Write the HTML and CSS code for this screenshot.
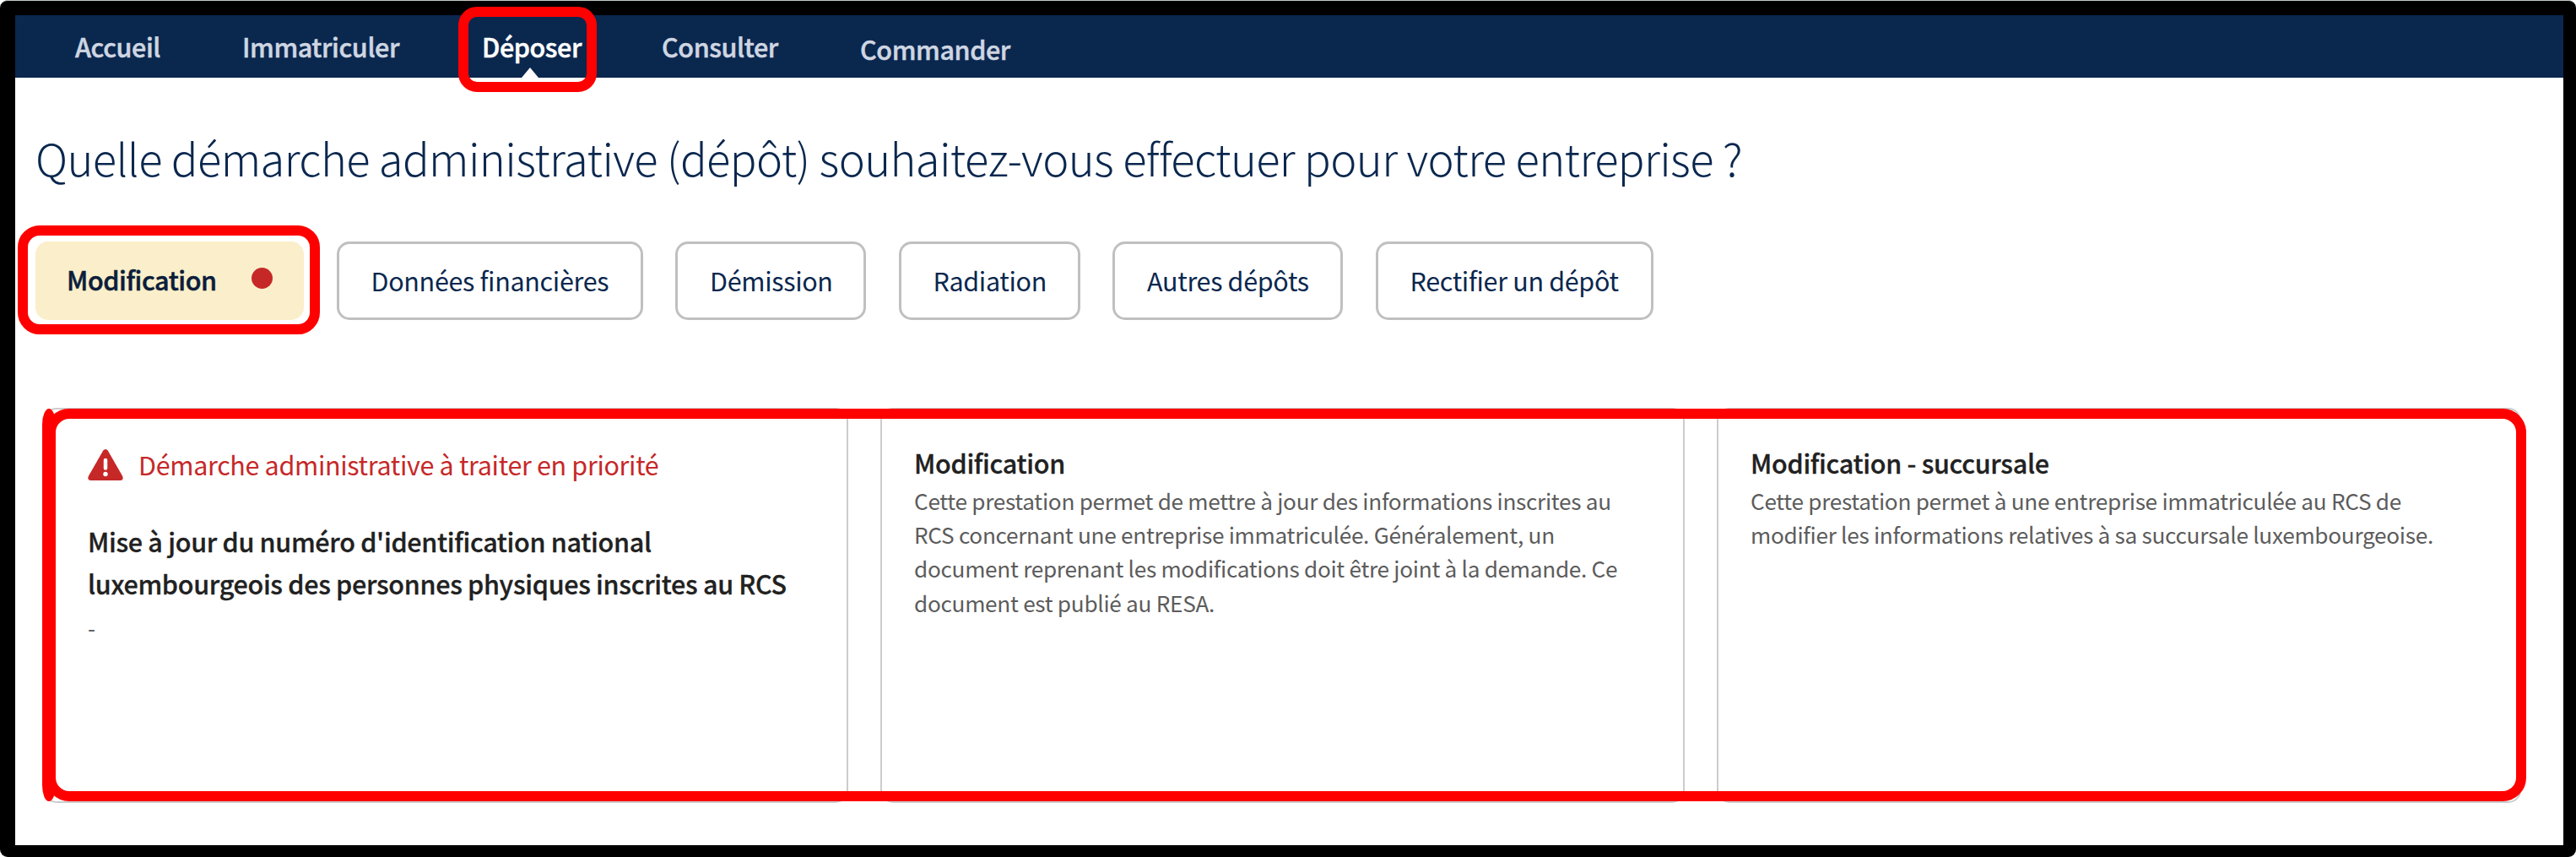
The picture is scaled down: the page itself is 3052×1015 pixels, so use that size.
FILE: index.html
```
<!DOCTYPE html>
<html lang="fr">
<head>
    <meta charset="UTF-8">
    <meta name="viewport" content="width=device-width, initial-scale=1.0">
    <title>Déposer</title>
    <link rel="stylesheet" href="styles.css">
</head>
<body>
    <div class="page">

        <!-- Menu principal -->
        <nav class="menu">
            <a class="menu-item accueil">Accueil</a>
            <a class="menu-item immatriculer">Immatriculer</a>
            <a class="menu-item active">Déposer<span class="highlight highlight-menu"></span></a>
            <a class="menu-item consulter">Consulter</a>
            <a class="menu-item commander">Commander</a>
        </nav>

        <main class="content">
            <h1>Quelle démarche administrative (dépôt) souhaitez-vous effectuer pour votre entreprise ?</h1>

            <!-- Choix de la démarche -->
            <div class="tabs">
                <button class="tab selected">Modification<span class="dot"></span><span class="highlight highlight-tab"></span></button>
                <button class="tab donnees">Données financières</button>
                <button class="tab demission">Démission</button>
                <button class="tab radiation">Radiation</button>
                <button class="tab autres">Autres dépôts</button>
                <button class="tab rectifier">Rectifier un dépôt</button>
            </div>

            <div class="cards">
                <div class="card">
                    <div class="alert">
                        <svg class="alert-icon" viewBox="0 0 42 37">
                            <path fill="#c62828" d="M18.300 1.600Q21-1.600 23.700 1.600L41.200 32Q42.800 36.500 38.500 37H3.500Q-.8 36.500.8 32Z"/>
                            <path stroke="#fff" stroke-width="4.500" stroke-linecap="round" d="M21 13v9.500"/>
                            <circle cx="21" cy="29.500" r="2.700" fill="#fff"/>
                        </svg>
                        <span>Démarche administrative à traiter en priorité</span>
                    </div>
                    <h2 class="priority">Mise à jour du numéro d'identification national<br>luxembourgeois des personnes physiques inscrites au RCS</h2>
                    <p>-</p>
                </div>
                <div class="card">
                    <h2>Modification</h2>
                    <p>Cette prestation permet de mettre à jour des informations inscrites au<br>RCS concernant une entreprise immatriculée. Généralement, un<br>document reprenant les modifications doit être joint à la demande. Ce<br>document est publié au RESA.</p>
                </div>
                <div class="card">
                    <h2>Modification - succursale</h2>
                    <p>Cette prestation permet à une entreprise immatriculée au RCS de<br>modifier les informations relatives à sa succursale luxembourgeoise.</p>
                </div>
                <span class="highlight highlight-cards"></span>
                <span class="highlight-edge"></span>
            </div>
        </main>

    </div>
</body>
</html>
```
FILE: styles.css
```
* {
    box-sizing: border-box;
}

html {
    background-color: #fff;
}

body {
    margin: 0;
    height: 1015px;
    overflow: hidden;
    font-family: "Noto Sans CJK SC", "Open Sans", sans-serif;
    letter-spacing: -0.3px;
    background-color: #000;
    border-top: 1px solid #c4cbc8;
    border-radius: 9px;
    padding: 17px 15px 14px 18px;
}

.page {
    height: 983px;
    background-color: #fff;
}

/* Menu */
.menu {
    display: flex;
    height: 74px;
    padding-left: 71px;
    background-color: #0a274e;
}

.menu-item {
    position: relative;
    font-size: 30.500px;
    font-weight: 500;
    letter-spacing: -0.4px;
    line-height: 44px;
    padding-top: 15px;
    color: #ced6e2;
    white-space: nowrap;
    -webkit-text-stroke: 0.5px;
}

.accueil { width: 198px; }
.immatriculer { width: 284px; }
.active { width: 213px; }
.consulter { width: 235px; }

.active {
    color: #fff;
}

.active::after {
    content: "";
    position: absolute;
    left: 47px;
    bottom: 0;
    border: 10px solid transparent;
    border-top: 0;
    border-bottom: 12px solid #fff;
}

.commander {
    padding-top: 18px;
}

/* Cadres rouges */
.highlight {
    position: absolute;
    border: 12px solid #f00;
    border-radius: 22px;
}

.highlight-menu {
    left: -28px;
    top: -10px;
    width: 164px;
    height: 101px;
}

.highlight-tab {
    left: -21px;
    top: -19px;
    width: 358px;
    height: 129px;
    border-radius: 26px;
}

.highlight-cards {
    left: 2px;
    top: 1px;
    width: 2939px;
    height: 465px;
    border-radius: 28px;
}

.highlight-edge {
    position: absolute;
    left: -2px;
    top: 1px;
    width: 16px;
    height: 465px;
    background-color: #f00;
    border-radius: 10px / 24px;
}

.content {
    padding: 0 24px;
}

h1 {
    margin: 0;
    padding-top: 56px;
    font-size: 52.500px;
    font-weight: 300;
    letter-spacing: -0.600px;
    line-height: 76px;
    color: #0a274e;
    white-space: nowrap;
}

/* Boutons */
.tabs {
    display: flex;
    gap: 38.500px;
    margin-top: 62px;
}

.tab {
    height: 93px;
    padding: 0 0 2px 38px;
    font-family: inherit;
    font-size: 30.500px;
    letter-spacing: -0.320px;
    text-align: left;
    white-space: nowrap;
    color: #0a274e;
    background-color: #fff;
    border: 3px solid #c0c0c0;
    border-radius: 15px;
}

.selected {
    position: relative;
    display: flex;
    align-items: center;
    width: 318px;
    padding: 0 0 3px 37px;
    font-weight: 500;
    letter-spacing: -0.400px;
    color: #0c1d3b;
    background-color: #faefca;
    border: 0;
    -webkit-text-stroke: 0.5px;
}

.donnees { width: 363px; }
.demission { width: 226px; }
.radiation { width: 215px; }
.autres { width: 273px; }
.rectifier { width: 329px; }

.dot {
    position: absolute;
    left: 256px;
    top: 31px;
    width: 25px;
    height: 25px;
    border-radius: 50%;
    background-color: #c62828;
}

/* Cartes */
.cards {
    position: relative;
    display: flex;
    gap: 38px;
    width: 2935px;
    margin: 104px 0 0 10px;
}

.card {
    flex: 1;
    min-width: 0;
    height: 468px;
    padding: 38px 38px;
    border: 2px solid #ccc;
    border-radius: 15px;
}

.alert {
    display: flex;
    align-items: center;
    gap: 18px;
    height: 50px;
    margin: 2px 0 41px;
    padding-left: 12px;
    font-size: 30.500px;
    letter-spacing: -0.330px;
    color: #c62828;
    white-space: nowrap;
}

.alert-icon {
    width: 42px;
    height: 37px;
}

h2 {
    margin: 0;
    font-size: 30.500px;
    font-weight: 500;
    line-height: 50px;
    color: #212121;
    white-space: nowrap;
    -webkit-text-stroke: 0.3px;
}

p {
    margin: 0;
    font-size: 26.200px;
    line-height: 40.200px;
    color: #5c5c5c;
    white-space: nowrap;
}

.priority,
.priority + p {
    padding-left: 12px;
}

.priority + p {
    margin-top: 7px;
}
```
